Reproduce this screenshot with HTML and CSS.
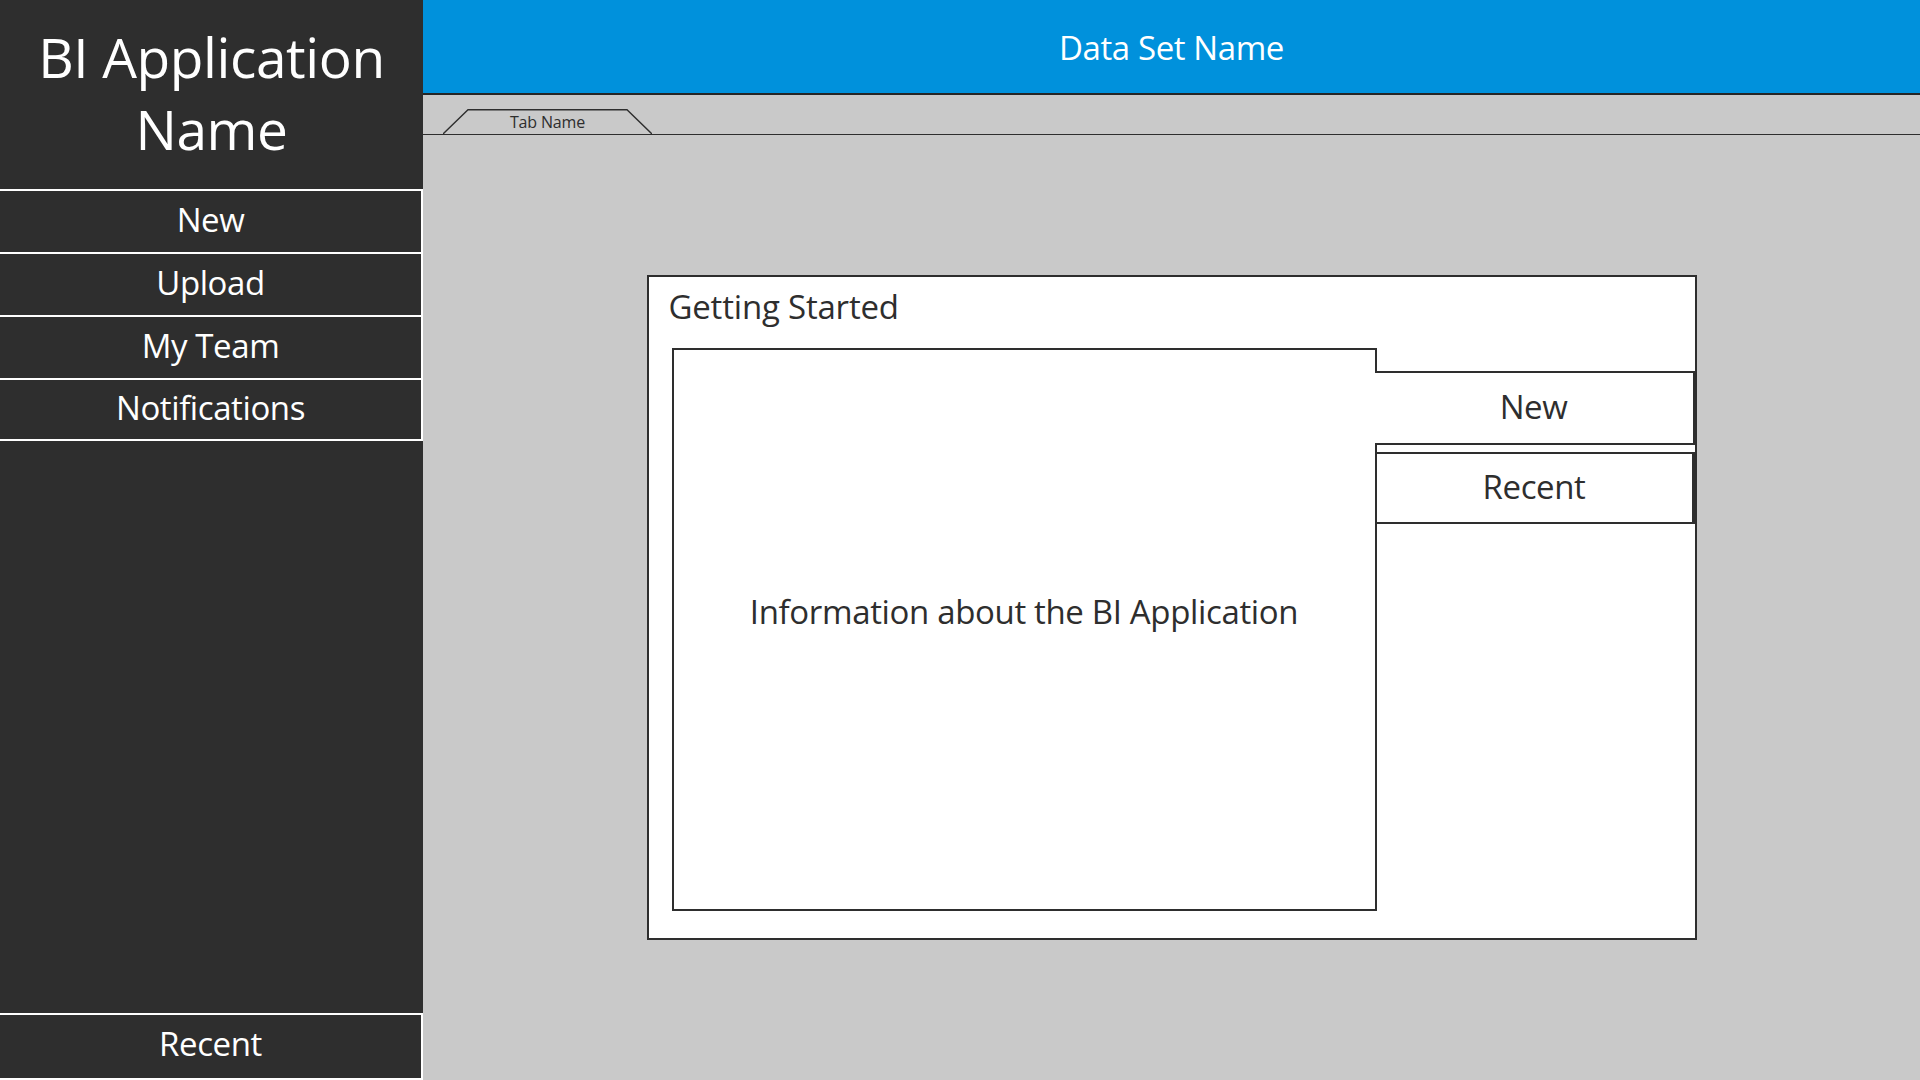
FILE: index.html
```html
<!DOCTYPE html>
<html lang="en">
<head>
<meta charset="utf-8">
<title>BI Application</title>
<link rel="stylesheet" href="styles.css">
</head>
<body>
<div class="app">
  <aside class="sidebar">
    <div class="brand">BI Application<br>Name</div>
    <nav class="nav">
      <div class="nav-item">New</div>
      <div class="nav-item">Upload</div>
      <div class="nav-item">My Team</div>
      <div class="nav-item">Notifications</div>
    </nav>
    <div class="spacer"></div>
    <div class="nav-item nav-bottom">Recent</div>
  </aside>
  <main class="main">
    <header class="topbar">Data Set Name</header>
    <div class="tabbar">
      <div class="tab">
        <svg class="tab-shape" viewBox="0 0 209 25" preserveAspectRatio="none"><polyline points="0,25 25,0.7 184,0.7 209,25" fill="none" stroke="#2e2e2e" stroke-width="1.4"/></svg>
        <span class="tab-label">Tab Name</span>
      </div>
    </div>
    <div class="stage">
      <section class="card">
        <h2 class="card-title">Getting Started</h2>
        <div class="card-row">
          <div class="panel">Information about the BI Application</div>
          <div class="vtabs">
            <div class="vtab vtab-active">New</div>
            <div class="vtab vtab-inactive">Recent</div>
          </div>
        </div>
      </section>
    </div>
  </main>
</div>
</body>
</html>
```

FILE: styles.css
```css
* { box-sizing: border-box; }

html, body {
  margin: 0;
  padding: 0;
  width: 1920px;
  height: 1080px;
  overflow: hidden;
  font-family: "Open Sans", "Noto Sans", sans-serif;
}

.app {
  display: flex;
  width: 1920px;
  height: 1080px;
}

.sidebar {
  width: 423px;
  flex: 0 0 423px;
  background: #2e2e2e;
  color: #ffffff;
  display: flex;
  flex-direction: column;
}

.brand {
  height: 189px;
  padding-top: 21px;
  font-size: 55px;
  line-height: 72px;
  letter-spacing: -0.4px;
  text-align: center;
}

.nav {
  display: flex;
  flex-direction: column;
}

.nav-item {
  height: 63px;
  border-top: 2px solid #ffffff;
  border-right: 2px solid #ffffff;
  display: flex;
  align-items: center;
  justify-content: center;
  padding-bottom: 5px;
  font-size: 33px;
  letter-spacing: -0.4px;
  color: #ffffff;
}

.nav-item:last-child {
  border-bottom: 2px solid #ffffff;
}

.spacer {
  flex: 1;
}

.nav-bottom {
  height: 67px;
  border-bottom: 2px solid #ffffff;
  padding-bottom: 6px;
}

.main {
  flex: 1;
  background: #c9c9c9;
  display: flex;
  flex-direction: column;
}

.topbar {
  height: 95px;
  background: #0091dc;
  border-bottom: 2px solid #262626;
  color: #ffffff;
  font-size: 33px;
  letter-spacing: -0.4px;
  display: flex;
  align-items: center;
  justify-content: center;
  padding-top: 2px;
}

.tabbar {
  margin-top: 14px;
  height: 26px;
  border-bottom: 1px solid #2e2e2e;
  padding-left: 20px;
  display: flex;
}

.tab {
  position: relative;
  width: 209px;
  height: 25px;
  display: flex;
  align-items: center;
  justify-content: center;
}

.tab-shape {
  position: absolute;
  left: 0;
  top: 0;
  width: 209px;
  height: 25px;
}

.tab-label {
  position: relative;
  font-size: 16px;
  letter-spacing: -0.15px;
  color: #2e2e2e;
  line-height: 20px;
  padding-top: 1px;
}

.stage {
  flex: 1;
  display: flex;
  align-items: center;
  justify-content: center;
}

.card {
  width: 1050px;
  height: 665px;
  border: 2px solid #2e2e2e;
  background: #ffffff;
  padding: 10px 0 0 23px;
  color: #2e2e2e;
}

.card-title {
  margin: 0 0 0 -3px;
  font-weight: 400;
  font-size: 33px;
  line-height: 40px;
  letter-spacing: -0.2px;
}

.card-row {
  margin-top: 21px;
  display: flex;
  align-items: flex-start;
}

.panel {
  width: 705px;
  height: 563px;
  border: 2px solid #2e2e2e;
  display: flex;
  align-items: center;
  justify-content: center;
  padding-bottom: 36px;
  font-size: 33px;
  letter-spacing: -0.35px;
}

.vtabs {
  width: 320px;
  margin-left: -2px;
  margin-top: 23px;
  display: flex;
  flex-direction: column;
}

.vtab {
  display: flex;
  align-items: center;
  justify-content: center;
  padding-bottom: 4px;
  font-size: 33px;
  letter-spacing: -0.4px;
  background: #ffffff;
}

.vtab-active {
  height: 74px;
  border-top: 2px solid #2e2e2e;
  border-right: 2px solid #2e2e2e;
  border-bottom: 2px solid #2e2e2e;
}

.vtab-inactive {
  margin-top: 7px;
  height: 72px;
  border: 2px solid #2e2e2e;
  border-right-width: 3px;
}
```
